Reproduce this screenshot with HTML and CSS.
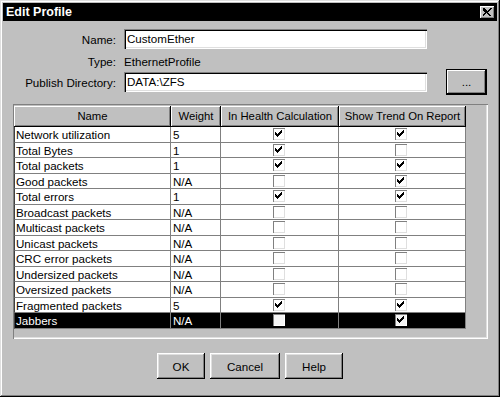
FILE: index.html
```html
<!DOCTYPE html>
<html>
<head>
<meta charset="utf-8">
<link rel="stylesheet" href="styles.css">
</head>
<body>
<div class="window">
  <div class="titlebar">
    <span class="title">Edit Profile</span>
    <span class="close"><svg width="9" height="8" viewBox="0 0 9 8" shape-rendering="crispEdges"><path d="M0 0h2v1h1v1h1v1h1v-1h1v-1h1v-1h2v1h-1v1h-1v1h-1v1h-1v1h1v1h1v1h1v1h-2v-1h-1v-1h-1v-1h-1v1h-1v1h-1v1h-2v-1h1v-1h1v-1h1v-1h-1v-1h-1v-1h-1z" fill="#000"/></svg></span>
  </div>
  <div class="form">
    <label class="lbl">Name:</label>
    <div class="input">CustomEther</div>
    <div></div>
    <label class="lbl lbl-type">Type:</label>
    <div class="value">EthernetProfile</div>
    <div></div>
    <label class="lbl">Publish Directory:</label>
    <div class="input">DATA:\ZFS</div>
    <button class="btn browse">...</button>
  </div>
  <div class="frame">
    <div class="table">
      <div class="row head">
        <div class="hc">Name</div>
        <div class="hc">Weight</div>
        <div class="hc">In Health Calculation</div>
        <div class="hc">Show Trend On Report</div>
      </div>
      <div class="row"><div class="c">Network utilization</div><div class="c">5</div><div class="c cb"><span class="box on"></span></div><div class="c cb"><span class="box on"></span></div></div>
      <div class="row"><div class="c">Total Bytes</div><div class="c">1</div><div class="c cb"><span class="box on"></span></div><div class="c cb"><span class="box"></span></div></div>
      <div class="row"><div class="c">Total packets</div><div class="c">1</div><div class="c cb"><span class="box on"></span></div><div class="c cb"><span class="box on"></span></div></div>
      <div class="row"><div class="c">Good packets</div><div class="c">N/A</div><div class="c cb"><span class="box"></span></div><div class="c cb"><span class="box on"></span></div></div>
      <div class="row"><div class="c">Total errors</div><div class="c">1</div><div class="c cb"><span class="box on"></span></div><div class="c cb"><span class="box on"></span></div></div>
      <div class="row"><div class="c">Broadcast packets</div><div class="c">N/A</div><div class="c cb"><span class="box"></span></div><div class="c cb"><span class="box"></span></div></div>
      <div class="row"><div class="c">Multicast packets</div><div class="c">N/A</div><div class="c cb"><span class="box"></span></div><div class="c cb"><span class="box"></span></div></div>
      <div class="row"><div class="c">Unicast packets</div><div class="c">N/A</div><div class="c cb"><span class="box"></span></div><div class="c cb"><span class="box"></span></div></div>
      <div class="row"><div class="c">CRC error packets</div><div class="c">N/A</div><div class="c cb"><span class="box"></span></div><div class="c cb"><span class="box"></span></div></div>
      <div class="row"><div class="c">Undersized packets</div><div class="c">N/A</div><div class="c cb"><span class="box"></span></div><div class="c cb"><span class="box"></span></div></div>
      <div class="row"><div class="c">Oversized packets</div><div class="c">N/A</div><div class="c cb"><span class="box"></span></div><div class="c cb"><span class="box"></span></div></div>
      <div class="row"><div class="c">Fragmented packets</div><div class="c">5</div><div class="c cb"><span class="box on"></span></div><div class="c cb"><span class="box on"></span></div></div>
      <div class="row sel"><div class="c">Jabbers</div><div class="c">N/A</div><div class="c cb"><span class="box"></span></div><div class="c cb"><span class="box on"></span></div></div>
    </div>
  </div>
  <div class="buttons">
    <button class="btn ok">OK</button>
    <button class="btn cancel">Cancel</button>
    <button class="btn help">Help</button>
  </div>
</div>
</body>
</html>
```

FILE: styles.css
```css
html, body {
  margin: 0;
  padding: 0;
  background: #c0c0c0;
}
body {
  font-family: "Liberation Sans", Arial, sans-serif;
  font-size: 11.6px;
  color: #000;
}
.window {
  width: 500px;
  height: 397px;
  box-sizing: border-box;
  padding: 3px;
  background: #c0c0c0;
  box-shadow: inset -1px -1px #000, inset 1px 1px #dfdfdf, inset -2px -2px #808080, inset 2px 2px #fff;
  display: flex;
  flex-direction: column;
}
.titlebar {
  height: 18px;
  background: #000;
  color: #fff;
  display: flex;
  align-items: center;
  justify-content: space-between;
  padding: 0 2px 0 3px;
}
.title {
  font-weight: bold;
  font-size: 12.5px;
}
.close {
  width: 15px;
  height: 13px;
  box-sizing: border-box;
  background: #c0c0c0;
  box-shadow: inset -1px -1px #000, inset 1px 1px #fff, inset -2px -2px #808080;
  display: flex;
  align-items: center;
  justify-content: center;
  padding-bottom: 1px;
}
.close svg { display: block; }
.form {
  display: grid;
  grid-template-columns: 113px 303px 1fr;
  grid-template-rows: 20px 20px 26px;
  column-gap: 8px;
  margin-top: 8px;
}
.lbl {
  text-align: right;
  align-self: center;
}
.lbl-type, .value {
  align-self: center;
  padding-top: 4px;
}
.input {
  background: #fff;
  height: 20px;
  box-sizing: border-box;
  align-self: center;
  padding: 3px 3px 0 3px;
  box-shadow: inset 1px 1px #808080, inset 2px 2px #000, inset -1px -1px #fff, inset -2px -2px #dfdfdf;
  line-height: 14px;
}
.btn {
  font-family: "Liberation Sans", Arial, sans-serif;
  font-size: 11.6px;
  color: #000;
  background: #c0c0c0;
  border: none;
  padding: 0;
  margin: 0;
  height: 26px;
  box-sizing: border-box;
  box-shadow: inset -1px -1px #000, inset 1px 1px #fff, inset -2px -2px #808080, inset 2px 2px #dfdfdf;
}
.browse {
  width: 41px;
  margin-left: 11px;
  box-shadow: inset 1px 1px #000, inset -1px -1px #000, inset -2px -2px #000, inset 2px 2px #fff, inset -3px -3px #808080;
  line-height: 26px;
}
.frame {
  margin: 9px 0 0 10px;
  width: 475px;
  height: 235px;
  box-sizing: border-box;
  padding: 2px 2px 2px 1px;
  box-shadow: inset 1px 1px #808080, inset -1px -1px #fff, inset -2px -2px #dfdfdf;
}
.table {
  display: flex;
  flex-direction: column;
  width: 452px;
}
.row {
  display: grid;
  grid-template-columns: 157px 50px 118px 127px;
  height: 15.5px;
  background: #fff;
}
.row.head {
  height: 21px;
  background: #c0c0c0;
}
.hc {
  font-size: 11.3px;
  text-align: center;
  line-height: 21px;
  white-space: nowrap;
  overflow: hidden;
  box-shadow: inset -1px -1px #000, inset 1px 1px #fff, inset -2px -2px #808080;
}
.c {
  box-sizing: border-box;
  border-right: 1px solid #808080;
  border-bottom: 1px solid #808080;
  padding-left: 2px;
  line-height: 15px;
  white-space: nowrap;
  overflow: hidden;
}
.c:first-child {
  border-left: 1px solid #404040;
  padding-left: 1px;
}
.row.sel {
  background: #000;
  color: #fff;
}
.cb {
  display: flex;
  align-items: center;
  justify-content: center;
  padding-left: 0;
}
.box {
  width: 12px;
  height: 12px;
  box-sizing: border-box;
  background: #fff;
  box-shadow: inset 1px 1px #808080, inset -1px -1px #dfdfdf;
  position: relative;
  margin-right: 2px;
}
.sel .box {
  background: #f4f4f4;
  box-shadow: inset 1px 1px #808080, inset -1px -1px #fff;
}
.box.on::after {
  content: "";
  position: absolute;
  left: 2px;
  top: 2px;
  width: 7px;
  height: 7px;
  background: url("data:image/svg+xml;utf8,<svg xmlns='http://www.w3.org/2000/svg' width='7' height='7' shape-rendering='crispEdges'><path d='M6 0h1v3h-1v1h-1v1h-1v1h-1v1h-1v-1h-1v-1h-1v-3h1v1h1v1h1v-1h1v-1h1v-1h1z' fill='black'/></svg>") no-repeat;
}
.buttons {
  display: flex;
  justify-content: center;
  gap: 5px;
  margin-top: 14px;
}
.ok { width: 48px; }
.cancel { width: 70px; }
.help { width: 58px; }
```
